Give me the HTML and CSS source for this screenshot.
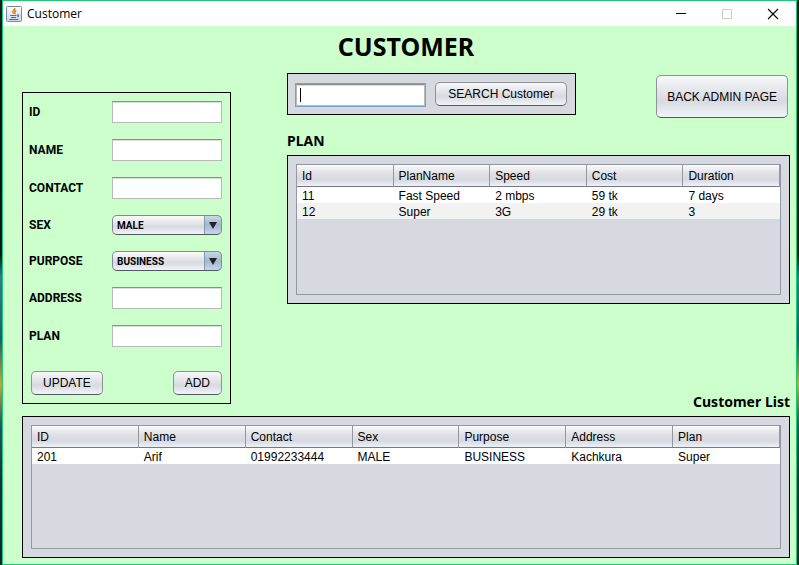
FILE: index.html
```html
<!DOCTYPE html>
<html lang="en">
<head>
<meta charset="utf-8">
<title>Customer</title>
<link rel="stylesheet" href="styles.css">
</head>
<body>
<div class="window">
  <header class="titlebar">
    <svg class="app-icon" viewBox="0 0 16 16" aria-hidden="true">
      <defs>
        <linearGradient id="tile" x1="0" y1="0" x2="0" y2="1">
          <stop offset="0" stop-color="#fbfcfd"/>
          <stop offset="1" stop-color="#cbd6e2"/>
        </linearGradient>
      </defs>
      <rect x=".5" y=".5" width="15" height="15" rx="1" fill="url(#tile)" stroke="#6f8ba6"/>
      <path d="M8.800 2c.5 1.600-2.800 2.500-1.900 4.300.3.600.9.900.8 1.500M10.200 4.300c-1.800.8-1.700 1.500-1.100 2.300.4.500.1.900-.4 1.200" fill="none" stroke="#ee7d1a" stroke-width="1.500"/>
      <path d="M4.200 9.500h6.300M5 11.500h5M11 9c2.300-.5 2.200 1.500.2 2M3.300 13.500h8.900" fill="none" stroke="#47719c" stroke-width="1.100"/>
    </svg>
    <span class="caption">Customer</span>
    <button class="win-button" type="button" aria-label="Minimize">
      <svg viewBox="0 0 12 12"><path d="M1 5.500h10" stroke="#000"/></svg>
    </button>
    <button class="win-button" type="button" aria-label="Maximize" disabled>
      <svg viewBox="0 0 12 12"><path d="M1.500 1.500h9v9h-9z" fill="none" stroke="#ccc"/></svg>
    </button>
    <button class="win-button" type="button" aria-label="Close">
      <svg viewBox="0 0 12 12"><path d="M1 1l10 10M11 1L1 11" stroke="#000" stroke-width="1.100"/></svg>
    </button>
  </header>

  <main class="content">
    <h1>CUSTOMER</h1>
    <div class="upper">
      <form class="customer-form">
        <label for="id">ID</label><input class="field" id="id" type="text">
        <label for="name">NAME</label><input class="field" id="name" type="text">
        <label for="contact">CONTACT</label><input class="field" id="contact" type="text">
        <label for="sex">SEX</label>
        <div class="combo"><select id="sex"><option>MALE</option><option>FEMALE</option></select></div>
        <label for="purpose">PURPOSE</label>
        <div class="combo"><select id="purpose"><option>BUSINESS</option><option>HOME</option></select></div>
        <label for="address">ADDRESS</label><input class="field" id="address" type="text">
        <label for="plan">PLAN</label><input class="field" id="plan" type="text">
        <div class="actions">
          <button class="button" type="button">UPDATE</button>
          <button class="button" type="button">ADD</button>
        </div>
      </form>

      <div class="side">
        <div class="toolbar">
          <form class="search panel">
            <div class="search-box">
              <input class="field" type="text" aria-label="Search customer">
              <span class="caret"></span>
            </div>
            <button class="button" type="button">SEARCH Customer</button>
          </form>
          <button class="button back" type="button">BACK ADMIN PAGE</button>
        </div>
        <h2>PLAN</h2>
        <section class="panel plans">
          <div class="viewport">
            <table>
              <thead><tr><th>Id</th><th>PlanName</th><th>Speed</th><th>Cost</th><th>Duration</th></tr></thead>
              <tbody>
                <tr><td>11</td><td>Fast Speed</td><td>2 mbps</td><td>59 tk</td><td>7 days</td></tr>
                <tr><td>12</td><td>Super</td><td>3G</td><td>29 tk</td><td>3</td></tr>
              </tbody>
            </table>
          </div>
        </section>
        <h2 class="list-title">Customer List</h2>
      </div>
    </div>

    <section class="panel customers">
      <div class="viewport">
        <table>
          <thead><tr><th>ID</th><th>Name</th><th>Contact</th><th>Sex</th><th>Purpose</th><th>Address</th><th>Plan</th></tr></thead>
          <tbody>
            <tr><td>201</td><td>Arif</td><td>01992233444</td><td>MALE</td><td>BUSINESS</td><td>Kachkura</td><td>Super</td></tr>
          </tbody>
        </table>
      </div>
    </section>
  </main>
</div>
</body>
</html>
```
FILE: styles.css
```css
* {
  box-sizing: border-box;
}

body {
  margin: 0;
  padding: 0 2px;
  background: linear-gradient(#10201c 0, #07110f 14%, #0b1a1c 45%, #2c7f90 49%, #1b5e70 60%, #c9a52e 68%, #205a60 75%, #16313a 85%, #04282e 100%);
  color: #000;
  font: 12px/16px "Liberation Sans", Arial, sans-serif;
}

.window {
  display: flex;
  flex-direction: column;
  min-height: 100vh;
  border: 1px solid #1fc877;
  background: #ccffcc;
}

.titlebar {
  display: flex;
  align-items: center;
  height: 25px;
  padding-left: 3px;
  background: #fff;
}

.app-icon {
  width: 16px;
  height: 16px;
}

.caption {
  flex: 1;
  padding-left: 5px;
  font: 12px/16px "Open Sans", "Noto Sans", sans-serif;
}

.win-button {
  display: grid;
  place-items: center;
  width: 46px;
  height: 25px;
  padding: 0;
  border: 0;
  background: none;
}

.win-button svg {
  width: 12px;
  height: 12px;
}

.content {
  display: flex;
  flex: 1;
  flex-direction: column;
  padding: 0 6px 6px 19px;
}

h1,
h2 {
  margin: 0;
  font-family: "Noto Sans", "Open Sans", sans-serif;
  font-weight: 700;
}

h1 {
  padding-bottom: 7px;
  font-size: 25px;
  line-height: 40px;
  text-align: center;
}

h2 {
  font-size: 14px;
  line-height: 20px;
}

.upper {
  display: grid;
  grid-template-columns: 209px 1fr;
  gap: 56px;
}

.customer-form {
  display: grid;
  grid-template-columns: 83px 1fr;
  gap: 16px 0;
  align-items: center;
  margin: 19px 0 8px;
  padding: 8px 8px 8px 6px;
  border: 1px solid #000;
}

.customer-form label {
  font: 700 12px/16px Roboto, "Liberation Sans", sans-serif;
}

.field {
  display: block;
  width: 100%;
  height: 22px;
  padding: 2px 6px;
  border: 1px solid #b8bab8;
  border-top-color: #8c8e8c;
  border-radius: 0;
  background: #fff;
  box-shadow: inset 0 1px #dcdcdc;
  font: inherit;
  outline: 0;
}

.combo {
  position: relative;
}

.combo select {
  display: block;
  width: 100%;
  height: 20px;
  padding: 1px 20px 0 4px;
  border: 1px solid #85899a;
  border-bottom-color: #515665;
  border-radius: 5px;
  background:
    linear-gradient(#8797a9, #8797a9) right 16px top / 1px 100% no-repeat,
    linear-gradient(#c9d7e5, #a3b8cc 50%, #c5d8ea) right / 16px 100% no-repeat,
    linear-gradient(#fbfbfc, #d8dae0 60%, #f0f3f8);
  color: #000;
  font: 700 10px/16px Roboto, "Liberation Sans", sans-serif;
  appearance: none;
}

.combo::after {
  content: "";
  position: absolute;
  top: 7px;
  right: 5px;
  border: solid transparent;
  border-width: 7px 4px 0;
  border-top-color: #202428;
  pointer-events: none;
}

.actions {
  display: flex;
  grid-column: 1 / -1;
  justify-content: space-between;
  padding: 8px 0 0 2px;
}

.button {
  height: 24px;
  padding: 0 11px;
  border: 1px solid #8f9298;
  border-bottom-color: #555963;
  border-radius: 5px;
  background: linear-gradient(#f7f8fa, #d8dae0 60%, #f0f3f8);
  color: #000;
  font: inherit;
  white-space: nowrap;
}

.side {
  display: flex;
  flex-direction: column;
  min-width: 0;
}

.toolbar {
  display: flex;
  align-items: flex-start;
  justify-content: space-between;
  padding-right: 2px;
}

.panel {
  padding: 8px;
  border: 1px solid #000;
  background: #d6d9df;
}

.search {
  display: flex;
  gap: 10px;
  align-items: center;
  width: 289px;
  height: 42px;
}

.search-box {
  position: relative;
  width: 129px;
  padding-top: 2px;
}

.search .button {
  flex: 1;
  padding: 0;
}

.search-box .field {
  box-shadow: 0 0 0 1px #73a4d1, inset 0 1px #dcdcdc;
}

.caret {
  position: absolute;
  top: 6px;
  left: 4px;
  width: 1px;
  height: 14px;
  background: #000;
}

.back {
  height: 43px;
  margin-top: 2px;
  padding: 0 10px;
}

.toolbar + h2 {
  padding: 13px 0 4px;
}

.plans {
  display: flex;
  height: 149px;
}

.list-title {
  margin-top: auto;
  text-align: right;
}

.customers {
  display: flex;
  flex: 1;
  margin-top: 4px;
}

.viewport {
  flex: 1;
  border: 1px solid #9297a1;
}

table {
  width: 100%;
  border-collapse: separate;
  border-spacing: 0;
  table-layout: fixed;
}

th,
td {
  padding: 0 5px;
  font-weight: 400;
  line-height: 16px;
  text-align: left;
}

th {
  height: 22px;
  border-right: 1px solid #9297a1;
  border-bottom: 1px solid #757985;
  background: linear-gradient(#fbfbfc, #dfe1e6 40%, #d6d9df 70%, #edf1f8);
}

td {
  height: 16px;
  padding-top: 2px;
  background: #fff;
  line-height: 14px;
}

tbody tr:nth-child(even) td {
  background: #f2f2f2;
}
```
